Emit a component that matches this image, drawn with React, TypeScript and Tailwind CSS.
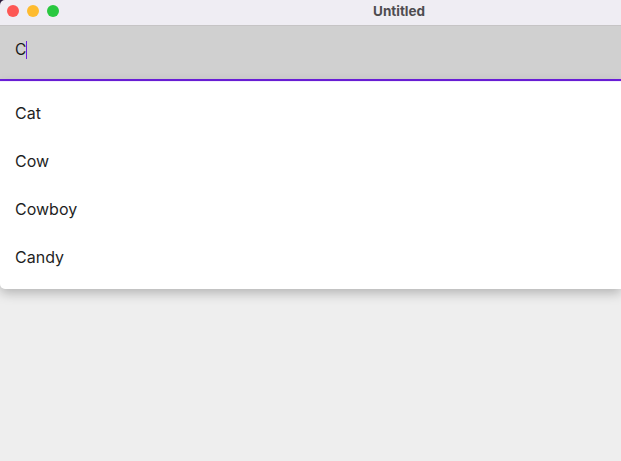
export default function App() {
  const items = ["Cat", "Cow", "Cowboy", "Candy"]

  return (
    <div className="flex h-[461px] w-[621px] flex-col overflow-hidden bg-[#eeeeee] font-['Inter',sans-serif]">
      <div className="shrink-0 bg-[#2a1a3a]">
        <header className="flex h-[26px] items-center rounded-tl-[5px] border-b border-[#c6c4c5] bg-[#efedf3] pb-[3px] pl-[7px]">
          <div className="flex gap-[8px]">
            <span className="h-[12px] w-[12px] rounded-full bg-[#fd5754]" />
            <span className="h-[12px] w-[12px] rounded-full bg-[#febb2e]" />
            <span className="h-[12px] w-[12px] rounded-full bg-[#29c83f]" />
          </div>
          <h1 className="ml-[314px] text-[13.5px] font-bold text-[#4e4c50]">Untitled</h1>
        </header>
      </div>
      <div className="flex h-[55px] shrink-0 items-center border-b-2 border-[#6e1fe0] bg-[#d0d0d0] pb-[6px] pl-[15px]">
        <span className="text-[15.5px] text-[#1a1a1a]">C</span>
        <span className="h-[18px] w-[1px] bg-[#6e1fe0]" />
      </div>
      <ul className="rounded-bl-[5px] border-t border-[#f3ecfd] bg-white pt-[7px] pb-[8px] text-[16px] text-[#1f1f1f] shadow-[0_4px_12px_rgba(0,0,0,0.25)]">
        {items.map((item) => (
          <li key={item} className="flex h-[48px] items-center pl-[15px]">
            {item}
          </li>
        ))}
      </ul>
    </div>
  )
}
